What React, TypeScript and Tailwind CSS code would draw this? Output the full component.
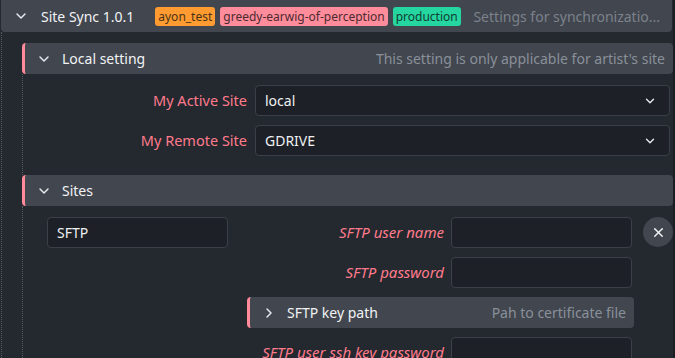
import { ChevronDown, ChevronRight, X } from 'lucide-react'

function SectionHeader({
  title,
  hint,
  open = true,
  className = '',
}: {
  title: string
  hint: string
  open?: boolean
  className?: string
}) {
  return (
    <div
      className={`flex h-[31px] items-center rounded border-l-[3px] border-[#ff8a9a] bg-[#41464f] pr-2 ${className}`}
    >
      <span className="flex w-[37px] justify-center text-[#e6e9ee]">
        {open ? <ChevronDown size={16} strokeWidth={2.2} /> : <ChevronRight size={16} strokeWidth={2.2} />}
      </span>
      <span className="text-[14px] text-[#f1f3f5]">{title}</span>
      <span className="ml-auto text-[14px] text-[#8a9099]">{hint}</span>
    </div>
  )
}

function SelectRow({ label, value }: { label: string; value: string }) {
  return (
    <div className="flex items-center gap-2">
      <label className="w-[224px] text-right text-[14.5px] text-[#ff7b8c]">{label}</label>
      <div className="mr-[3px] flex h-[31px] flex-1 items-center rounded border border-[#3b4048] bg-[#1d2026] pl-[9px] pr-[12px] text-[14px] text-[#eef0f3]">
        <span>{value}</span>
        <ChevronDown size={14} strokeWidth={2.4} className="ml-auto text-[#e6e9ee]" />
      </div>
    </div>
  )
}

function FieldRow({ label }: { label: string }) {
  return (
    <div className="flex items-center gap-[7px]">
      <label className="w-[197px] whitespace-nowrap text-right text-[15px] italic text-[#ff7b8c]">{label}</label>
      <div className="h-[31px] w-[181px] rounded border border-[#3b4048] bg-[#1d2026]" />
    </div>
  )
}

export default function App() {
  return (
    <div className="flex h-[358px] w-[675px] overflow-hidden bg-[#1b1e23] font-['Noto_Sans',sans-serif]">
      <div className="w-[673px] bg-[#24282f]">
        <header className="mx-[1px] flex h-8 items-center rounded-b bg-[#41464f] pr-3">
          <span className="flex w-[40px] justify-center text-[#e6e9ee]">
            <ChevronDown size={16} strokeWidth={2.2} />
          </span>
          <span className="text-[14px] text-[#f1f3f5]">Site Sync 1.0.1</span>
          <div className="ml-[21px] flex items-center gap-[5px] text-[12px]">
            <span className="rounded-[3px] bg-[#ff9b30] px-[3px] leading-[19px] text-[#4a3317]">ayon_test</span>
            <span className="rounded-[3px] bg-[#ff8c9a] px-[3px] leading-[19px] text-[#4d2a30]">greedy-earwig-of-perception</span>
            <span className="rounded-[3px] bg-[#26d6a1] px-[3px] leading-[19px] text-[#0f3d30]">production</span>
          </div>
          <span className="ml-auto text-[14px] text-[#7c828b]">Settings for synchronizatio...</span>
        </header>

        <div className="ml-[1px] border-l border-dotted border-[#555a63] pl-[20px] pt-[11px]">
          <SectionHeader title="Local setting" hint="This setting is only applicable for artist's site" />
          <div className="flex flex-col gap-[9px] border-l border-dotted border-[#555a63] pb-[19px] pt-[11px]">
            <SelectRow label="My Active Site" value="local" />
            <SelectRow label="My Remote Site" value="GDRIVE" />
          </div>

          <SectionHeader title="Sites" hint="" />
          <div className="flex h-[200px] items-start border-l border-dotted border-[#555a63] pt-[11px]">
            <div className="ml-[24px] flex h-[31px] w-[181px] items-center rounded border border-[#3b4048] bg-[#1d2026] px-[9px] text-[14px] text-[#eef0f3]">
              SFTP
            </div>
            <div className="ml-[19px] flex w-[387px] flex-col gap-[9px]">
              <FieldRow label="SFTP user name" />
              <FieldRow label="SFTP password" />
              <SectionHeader title="SFTP key path" hint="Pah to certificate file" open={false} className="rounded-[4px]" />
              <FieldRow label="SFTP user ssh key password" />
            </div>
            <button className="ml-[9px] flex h-[30px] w-[30px] items-center justify-center rounded-full bg-[#41464f] text-[#f1f3f5]">
              <X size={15} strokeWidth={2.4} />
            </button>
          </div>
        </div>
      </div>
    </div>
  )
}
